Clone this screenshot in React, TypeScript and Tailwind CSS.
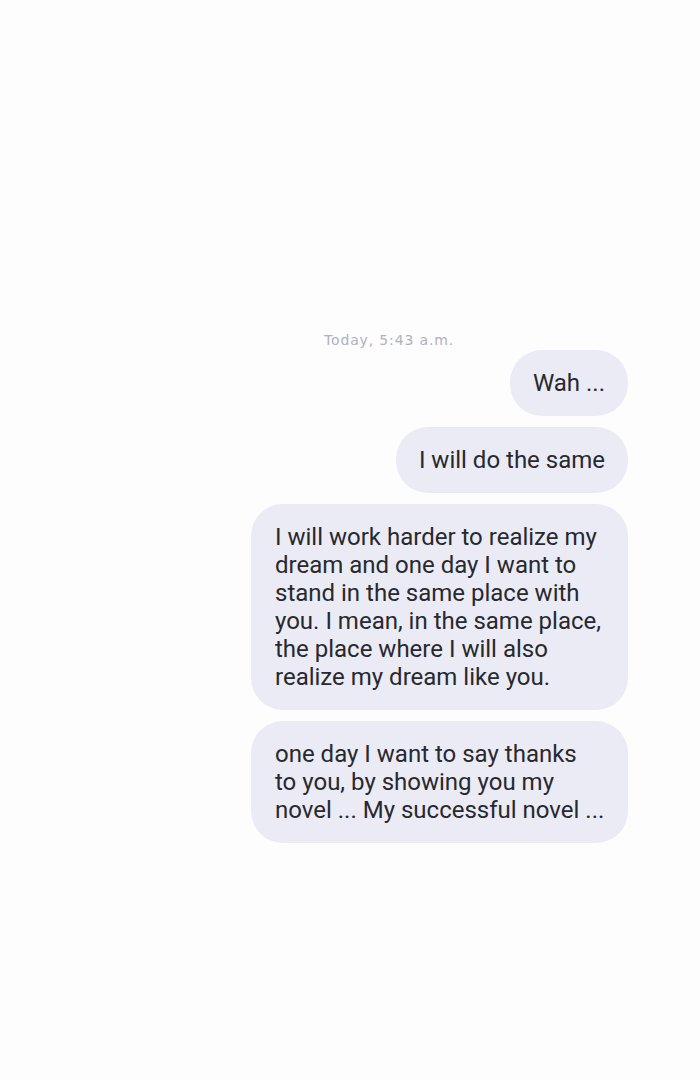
import React from "react";

const msgs: string[][] = [
  ["Wah ..."],
  ["I will do the same"],
  [
    "I will work harder to realize my",
    "dream and one day I want to",
    "stand in the same place with",
    "you. I mean, in the same place,",
    "the place where I will also",
    "realize my dream like you.",
  ],
  [
    "one day I want to say thanks",
    "to you, by showing you my",
    "novel ... My successful novel ...",
  ],
];

export default function App() {
  return (
    <div className="w-[700px] h-[1079px] bg-[#fdfdfd] overflow-hidden">
      <div className="pt-[332px] flex flex-col">
        <div
          className="pl-[324px] text-[14px] leading-[16px] text-[#b0b0c2] tracking-[0.85px]"
          style={{ fontFamily: '"DejaVu Sans", sans-serif' }}
        >
          Today, 5:43 a.m.
        </div>
        <div className="mt-[2px] pr-[72px] flex flex-col items-end gap-[11px]">
          {msgs.map((lines, i) => (
            <div
              key={i}
              className={
                (lines.length > 1 ? "w-[377px] px-[24px] " : "px-[23px] ") +
                "bg-[#ebebf5] rounded-[32px] py-[19px] text-[24px] leading-[28px] text-[#28282f] whitespace-nowrap"
              }
              style={{ fontFamily: 'Roboto, "Noto Sans", sans-serif' }}
            >
              {lines.map((l, j) => (
                <div key={j}>{l}</div>
              ))}
            </div>
          ))}
        </div>
      </div>
    </div>
  );
}
